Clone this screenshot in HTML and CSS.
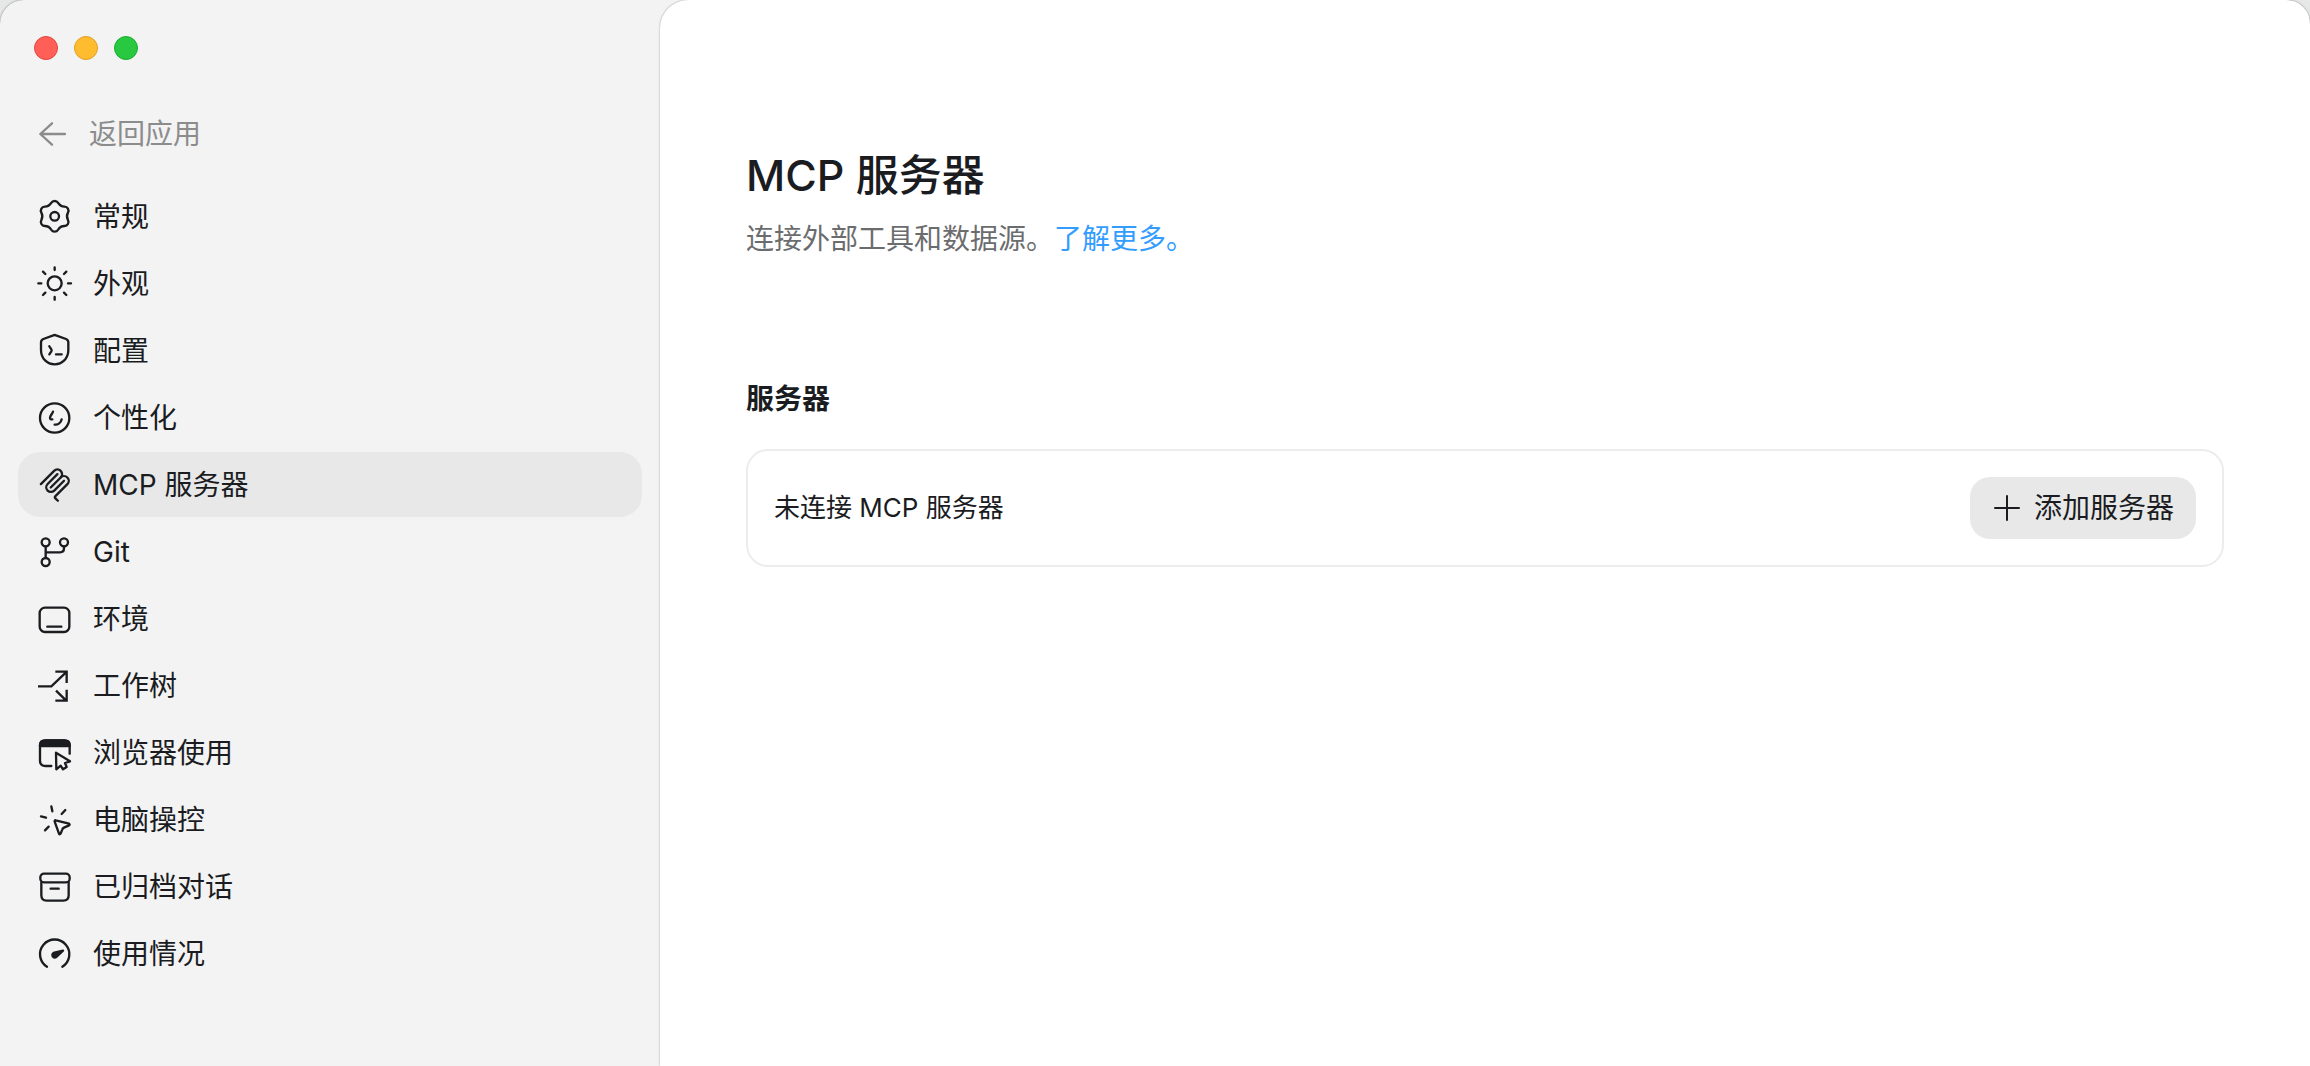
FILE: index.html
```html
<!DOCTYPE html>
<html lang="zh-CN">
<head>
<meta charset="utf-8">
<meta name="viewport" content="width=device-width, initial-scale=1">
<title>MCP 服务器</title>
<link rel="stylesheet" href="styles.css">
</head>
<body>
<div class="window">
  <aside class="sidebar">
    <div class="window-controls">
      <button class="control control-close" type="button" aria-label="关闭"></button>
      <button class="control control-minimize" type="button" aria-label="最小化"></button>
      <button class="control control-zoom" type="button" aria-label="缩放"></button>
    </div>
    <a class="back" href="#">
      <svg class="icon" viewBox="0 0 114 114" aria-hidden="true"><path d="M93 57H19M54 25L19 57l35 32"/></svg>
      <span>返回应用</span>
    </a>
    <nav class="nav">
      <a class="nav-item" href="#">
        <svg class="icon" viewBox="0 0 114 114" aria-hidden="true"><path d="M45.7 14.8A12 12 0 0 1 66.3 14.8A23 23 0 0 0 85.6 26A12 12 0 0 1 95.9 43.8A23 23 0 0 0 95.9 66.2A12 12 0 0 1 85.6 84A23 23 0 0 0 66.3 95.2A12 12 0 0 1 45.7 95.2A23 23 0 0 0 26.4 84A12 12 0 0 1 16.1 66.2A23 23 0 0 0 16.1 43.8A12 12 0 0 1 26.4 26A23 23 0 0 0 45.7 14.8Z"/><circle cx="56" cy="55" r="13"/></svg>
        <span>常规</span>
      </a>
      <a class="nav-item" href="#">
        <svg class="icon" viewBox="0 0 114 114" aria-hidden="true"><circle cx="56" cy="55" r="21"/><path d="M56 7v8M56 96v8M7 55h9M96 55h9M21 20l7 7M91 20l-7 7M21 90l7-7M91 90l-7-7"/></svg>
        <span>外观</span>
      </a>
      <a class="nav-item" href="#">
        <svg class="icon" viewBox="0 0 114 114" aria-hidden="true"><path d="M52 10L22 21Q15 24 15 31V54C15 80 34 97 56 97S97 80 97 54V31Q97 24 90 21L60 10Q56 8 52 10ZM40 43l6 9q2 3 0 6l-6 9M60 67h17"/></svg>
        <span>配置</span>
      </a>
      <a class="nav-item" href="#">
        <svg class="icon" viewBox="0 0 114 114" aria-hidden="true"><circle cx="56" cy="57" r="44"/><path d="M51 38C48 46 43 49 42 56Q42 61 49 61M56 77C66 78 75 71 77 61"/></svg>
        <span>个性化</span>
      </a>
      <a class="nav-item is-active" href="#" aria-current="page">
        <svg class="icon icon-mcp" viewBox="0 0 195 195" aria-hidden="true"><g transform="translate(7 8)"><path d="M18 84.850L85.880 16.970C95.250 7.600 110.450 7.600 119.820 16.970C129.200 26.340 129.200 41.540 119.820 50.910L68.560 102.180"/><path d="M119.820 50.910C129.200 41.540 144.390 41.540 153.760 50.910L154.120 51.260C163.490 60.640 163.490 75.830 154.120 85.210L92.720 146.600C89.600 149.720 89.600 154.790 92.720 157.910L105.330 170.520"/><path d="M102.850 33.940L52.650 84.150C43.280 93.520 43.280 108.710 52.650 118.090C62.020 127.460 77.220 127.460 86.590 118.090L136.790 67.880"/></g></svg>
        <span>MCP 服务器</span>
      </a>
      <a class="nav-item" href="#">
        <svg class="icon" viewBox="0 0 114 114" aria-hidden="true"><circle cx="29" cy="28" r="12"/><circle cx="84" cy="28" r="12"/><circle cx="29" cy="87" r="12"/><path d="M29 40v35M84 40v6q0 12-12 12H29"/></svg>
        <span>Git</span>
      </a>
      <a class="nav-item" href="#">
        <svg class="icon" viewBox="0 0 114 114" aria-hidden="true"><rect x="11" y="23" width="89" height="73" rx="16"/><path d="M34 80h42"/></svg>
        <span>环境</span>
      </a>
      <a class="nav-item" href="#">
        <svg class="icon icon-square" viewBox="0 0 114 114" aria-hidden="true"><path d="M6 58H46L90 16M58 14H92V48M60 71L90 100M58 101H92V68"/></svg>
        <span>工作树</span>
      </a>
      <a class="nav-item" href="#">
        <svg class="icon" viewBox="0 0 114 114" aria-hidden="true"><path d="M46 96H28Q12 96 12 80V34Q12 19 28 19H85Q101 19 101 34V59M60 56L102 82L87 87L92 99L81 106L74 95L61 106Z"/><path class="fill" d="M12 36V34Q12 19 28 19H85Q101 19 101 34V36Z"/></svg>
        <span>浏览器使用</span>
      </a>
      <a class="nav-item" href="#">
        <svg class="icon" viewBox="0 0 114 114" aria-hidden="true"><path d="M46 16l3 15M88 27L77 39M15 46l15 4M38 77L27 88M59 58L99 68Q103 71 99 73L84 80Q80 82 79 85L74 98Q71 102 69 98L56 62Q56 57 59 58Z"/></svg>
        <span>电脑操控</span>
      </a>
      <a class="nav-item" href="#">
        <svg class="icon" viewBox="0 0 114 114" aria-hidden="true"><rect x="13" y="17" width="88" height="26" rx="11"/><path d="M16 43V82Q16 98 32 98H82Q98 98 98 82V43M44 62h24"/></svg>
        <span>已归档对话</span>
      </a>
      <a class="nav-item" href="#">
        <svg class="icon" viewBox="0 0 114 114" aria-hidden="true"><path d="M33 95A44 44 0 1 1 79 95"/><path class="fill" d="M81 47L55 53Q47 57 50 64Q55 71 62 65Z"/></svg>
        <span>使用情况</span>
      </a>
    </nav>
  </aside>
  <main class="main">
    <h1 class="title">MCP 服务器</h1>
    <p class="subtitle">连接外部工具和数据源。<a class="link" href="#">了解更多。</a></p>
    <section class="servers">
      <h2 class="section-title">服务器</h2>
      <div class="card">
        <span>未连接 MCP 服务器</span>
        <button class="add" type="button">
          <svg class="add-icon" viewBox="0 0 34 34" aria-hidden="true"><path d="M17 5v24M5 17h24"/></svg>
          <span>添加服务器</span>
        </button>
      </div>
    </section>
  </main>
</div>
</body>
</html>
```
FILE: styles.css
```css
* {
  box-sizing: border-box;
}

body {
  margin: 0;
  background: #e6e8e8;
  color: #1a1c1f;
  font-family: Inter, "Noto Sans CJK SC", sans-serif;
  font-size: 28px;
  line-height: 40px;
}

a {
  color: inherit;
  text-decoration: none;
}

h1, h2, p {
  margin: 0;
}

.window {
  display: grid;
  grid-template-columns: 660px 1fr;
  min-height: 100vh;
  overflow: hidden;
  border-radius: 24px 24px 0 0;
  background: #f3f3f3;
  box-shadow: 0 0 2px rgba(0, 0, 0, 0.5);
}

.sidebar {
  padding: 36px 18px;
}

.window-controls {
  display: flex;
  gap: 16px;
  padding-left: 16px;
}

.control {
  width: 24px;
  height: 24px;
  padding: 0;
  border: 1px solid;
  border-radius: 50%;
}

.control-close {
  border-color: #e2463f;
  background: #ff5f57;
}

.control-minimize {
  border-color: #e0a028;
  background: #febc2e;
}

.control-zoom {
  border-color: #1eac2f;
  background: #28c840;
}

.back,
.nav-item {
  display: flex;
  align-items: center;
  height: 65px;
}

.back {
  gap: 17px;
  margin: 41px 0 18px;
  padding: 0 16px;
  color: #8c8c8d;
}

.nav {
  display: flex;
  flex-direction: column;
  gap: 2px;
}

.nav-item {
  gap: 19px;
  padding: 0 18px;
  border-radius: 22px;
}

.is-active {
  background: #e8e8e8;
}

.icon {
  flex: none;
  width: 38px;
  height: 38px;
  fill: none;
  stroke: currentColor;
  stroke-width: 7;
  stroke-linecap: round;
  stroke-linejoin: round;
}

.icon-mcp {
  stroke-width: 12;
}

.icon-square {
  stroke-linecap: butt;
  stroke-linejoin: miter;
}

.fill {
  fill: currentColor;
}

.main {
  padding: 145px 86px;
  border-radius: 28px 0 0 0;
  background: #fff;
  box-shadow: 0 0 2px rgba(0, 0, 0, 0.4);
}

.title {
  font-size: 43px;
  font-weight: 500;
  line-height: 60px;
}

.subtitle {
  margin-top: 14px;
  color: #6b6c6d;
}

.link {
  color: #339cff;
}

.servers {
  margin-top: 120px;
}

.section-title {
  font-size: 28px;
  font-weight: 600;
}

.card {
  display: flex;
  align-items: center;
  justify-content: space-between;
  margin-top: 30px;
  padding: 26px;
  border: 2px solid #ececec;
  border-radius: 22px;
  font-size: 26px;
}

.add {
  display: flex;
  align-items: center;
  gap: 10px;
  height: 62px;
  padding: 0 22px 0 20px;
  border: 0;
  border-radius: 20px;
  background: #e8e8e8;
  color: inherit;
  font: inherit;
  font-size: 28px;
}

.add-icon {
  width: 34px;
  height: 34px;
  fill: none;
  stroke: currentColor;
  stroke-width: 2;
  stroke-linecap: round;
}
```
